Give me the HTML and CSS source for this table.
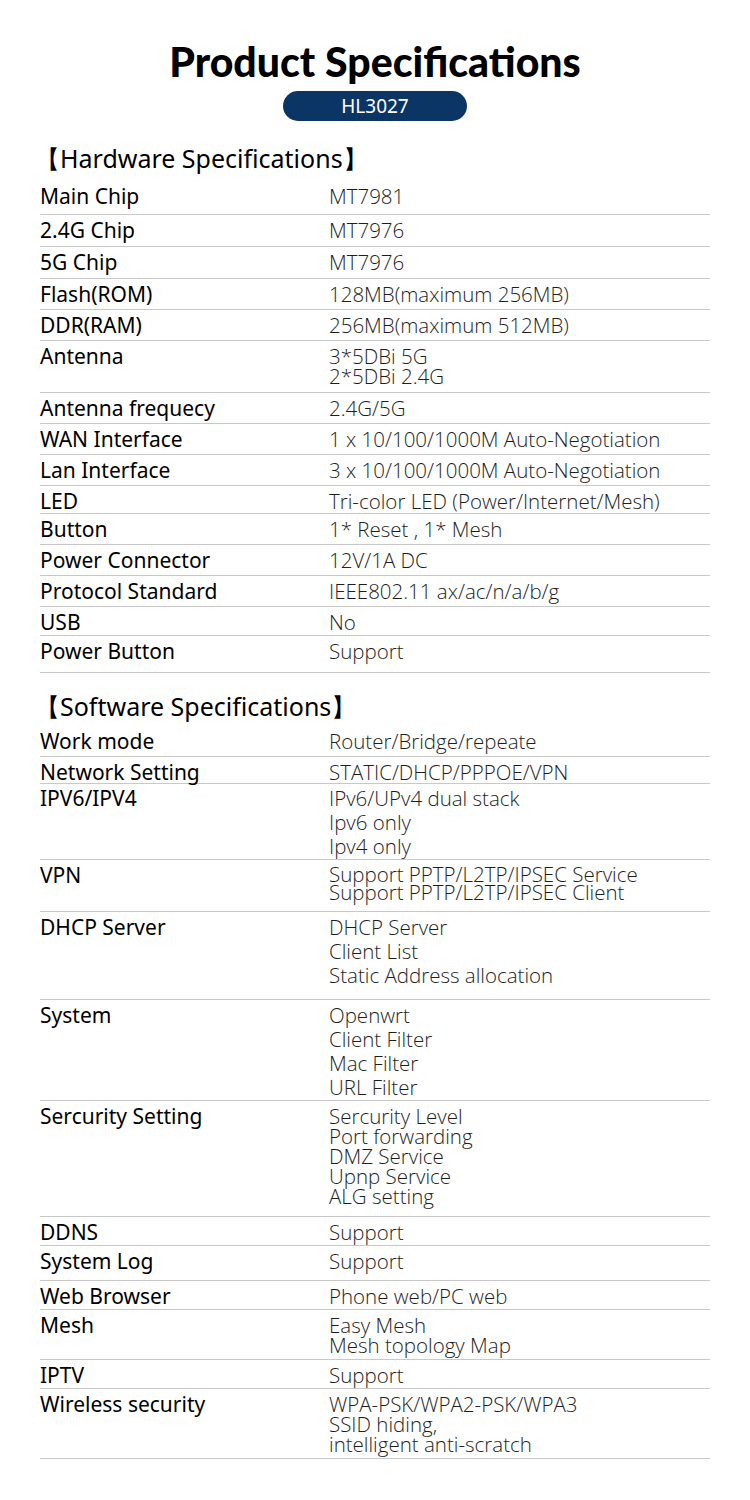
FILE: index.html
```html
<!DOCTYPE html>
<html lang="en">
<head>
<meta charset="utf-8">
<title>Product Specifications</title>
<link rel="stylesheet" href="styles.css">
</head>
<body>
<main class="page">
  <header class="head">
    <h1 class="title">Product Specifications</h1>
    <div class="model">HL3027</div>
  </header>

  <h2 class="section first">【Hardware Specifications】</h2>
  <div class="specs">
    <div class="row tall"><div class="k">Main Chip</div><div class="v">MT7981</div></div>
    <div class="row plus"><div class="k">2.4G Chip</div><div class="v">MT7976</div></div>
    <div class="row plus"><div class="k">5G Chip</div><div class="v">MT7976</div></div>
    <div class="row"><div class="k">Flash(ROM)</div><div class="v">128MB(maximum 256MB)</div></div>
    <div class="row"><div class="k">DDR(RAM)</div><div class="v">256MB(maximum 512MB)</div></div>
    <div class="row"><div class="k">Antenna</div><div class="v tight pb2">3*5DBi 5G<br>2*5DBi 2.4G</div></div>
    <div class="row"><div class="k">Antenna frequecy</div><div class="v">2.4G/5G</div></div>
    <div class="row"><div class="k">WAN Interface</div><div class="v">1 x 10/100/1000M Auto-Negotiation</div></div>
    <div class="row"><div class="k">Lan Interface</div><div class="v">3 x 10/100/1000M Auto-Negotiation</div></div>
    <div class="row shorter"><div class="k">LED</div><div class="v">Tri-color LED (Power/Internet/Mesh)</div></div>
    <div class="row"><div class="k">Button</div><div class="v">1* Reset , 1* Mesh</div></div>
    <div class="row"><div class="k">Power Connector</div><div class="v">12V/1A DC</div></div>
    <div class="row"><div class="k">Protocol Standard</div><div class="v">IEEE802.11 ax/ac/n/a/b/g</div></div>
    <div class="row short"><div class="k">USB</div><div class="v">No</div></div>
    <div class="row"><div class="k">Power Button</div><div class="v pb6">Support</div></div>
  </div>

  <h2 class="section second">【Software Specifications】</h2>
  <div class="specs">
    <div class="row"><div class="k">Work mode</div><div class="v">Router/Bridge/repeate</div></div>
    <div class="row shortest"><div class="k">Network Setting</div><div class="v">STATIC/DHCP/PPPOE/VPN</div></div>
    <div class="row"><div class="k">IPV6/IPV4</div><div class="v loose">IPv6/UPv4 dual stack<br>Ipv6 only<br>Ipv4 only</div></div>
    <div class="row"><div class="k">VPN</div><div class="v tight18 pb6">Support PPTP/L2TP/IPSEC Service<br>Support PPTP/L2TP/IPSEC Client</div></div>
    <div class="row"><div class="k">DHCP Server</div><div class="v loose pb11">DHCP Server<br>Client List<br>Static Address allocation</div></div>
    <div class="row"><div class="k">System</div><div class="v loose">Openwrt<br>Client Filter<br>Mac Filter<br>URL Filter</div></div>
    <div class="row"><div class="k">Sercurity Setting</div><div class="v tight pb6">Sercurity Level<br>Port forwarding<br>DMZ Service<br>Upnp Service<br>ALG setting</div></div>
    <div class="row short"><div class="k">DDNS</div><div class="v">Support</div></div>
    <div class="row"><div class="k">System Log</div><div class="v pb4">Support</div></div>
    <div class="row short"><div class="k">Web Browser</div><div class="v">Phone web/PC web</div></div>
    <div class="row"><div class="k">Mesh</div><div class="v tight">Easy Mesh<br>Mesh topology Map</div></div>
    <div class="row short"><div class="k">IPTV</div><div class="v">Support</div></div>
    <div class="row"><div class="k">Wireless security</div><div class="v tight">WPA-PSK/WPA2-PSK/WPA3<br>SSID hiding,<br>intelligent anti-scratch</div></div>
  </div>
</main>
</body>
</html>
```

FILE: styles.css
```css
* { box-sizing: border-box; }

html, body {
  margin: 0;
  padding: 0;
  background: #ffffff;
}

.page {
  width: 750px;
  padding: 34px 40px 40px 40px;
  font-family: "Noto Sans", "Open Sans", sans-serif;
  color: #000000;
}

.head {
  display: flex;
  flex-direction: column;
  align-items: center;
}

.title {
  margin: 0;
  font-family: Lato, "Noto Sans", sans-serif;
  font-weight: 900;
  font-size: 41px;
  line-height: 56px;
  color: #000000;
}

.model {
  margin-top: 1px;
  width: 184px;
  height: 30px;
  border-radius: 15px;
  background: #0b3565;
  color: #ffffff;
  font-family: "Noto Sans", sans-serif;
  font-size: 19px;
  line-height: 30px;
  text-align: center;
}

.section {
  margin: 0 0 5px -5px;
  font-size: 25px;
  font-weight: 400;
  line-height: 36px;
  color: #000000;
}

.section.first {
  margin-top: 19px;
}

.section.second {
  margin-top: 15px;
  margin-bottom: 2px;
}

.specs {
  display: flex;
  flex-direction: column;
}

.row {
  display: grid;
  grid-template-columns: 289px 1fr;
  padding: 5px 0 4px 0;
  border-bottom: 1px solid #c9c9c9;
}

.row.tall {
  padding-bottom: 7px;
}

.row.plus {
  padding-bottom: 5px;
}

.row.short {
  padding-bottom: 2px;
}

.row.shorter {
  padding-bottom: 1px;
}

.row.shortest {
  padding-bottom: 0;
  margin-bottom: -1px;
}

.k {
  font-size: 21px;
  font-weight: 400;
  line-height: 21px;
  color: #000000;
}

.v {
  font-family: "Open Sans", sans-serif;
  font-weight: 300;
  font-size: 20.5px;
  line-height: 21px;
  color: #1e1e1e;
}

.v.tight {
  line-height: 20px;
}

.v.tight18 {
  line-height: 18px;
}

.v.loose {
  line-height: 24px;
  margin-top: -2px;
  margin-bottom: -3px;
}

.v.pb2 { padding-bottom: 2px; }
.v.pb4 { padding-bottom: 4px; }
.v.pb6 { padding-bottom: 6px; }
.v.pb11 { padding-bottom: 11px; }
```
